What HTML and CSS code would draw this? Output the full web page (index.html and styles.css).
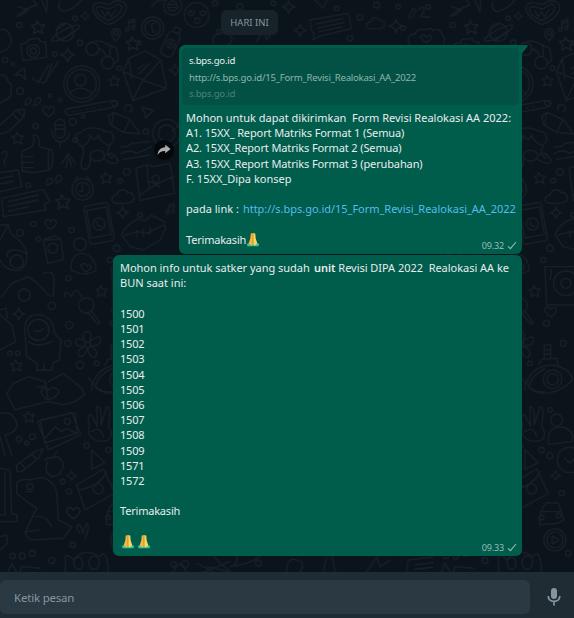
FILE: index.html
```html
<!DOCTYPE html>
<html lang="id">
<head>
<meta charset="utf-8">
<title>Chat</title>
<link rel="stylesheet" href="styles.css">
</head>
<body>
<svg class="defs" width="0" height="0" aria-hidden="true">
  <defs>
    <symbol id="pray" viewBox="0 0 14 15">
      <path d="M.7 12.200 3 10.700 7 12.500 11 10.700 13.300 12.200 12.300 14.300H1.700Z" fill="#35c3a0"/>
      <path d="M6.900 1.200H5.400Q4.800 1.200 4.700 2.200L4.300 6.500 2.700 11.200 4.800 13.600 6.900 12.600Z" fill="#f6b73c"/>
      <path d="M7.100 1.200H8.600Q9.200 1.200 9.300 2.200L9.700 6.500 11.300 11.200 9.200 13.600 7.100 12.600Z" fill="#ffd45c"/>
      <path d="M7 2V12" stroke="#d08a24" stroke-width=".6"/>
    </symbol>
    <symbol id="tick" viewBox="0 0 10 9"><path d="M1 5.300 3.400 7.700 9 1" fill="none" stroke="#8fbfb3" stroke-width="1.100"/></symbol>
    <symbol id="star" viewBox="-20 -20 40 40"><path d="M-3-18 4-7 18-7 9 4 13 17 0 10-12 17-9 3-18-6-6-7Z"/></symbol>
    <symbol id="spark" viewBox="-20 -20 40 40"><path d="M0-18Q2-3 18 0 3 3 0 18-3 3-18 0-2-3 0-18Z"/></symbol>
    <symbol id="heart" viewBox="-20 -20 40 40"><path d="M0 16Q-18 4-17-6C-15-16-3-15 0-6 4-16 17-14 17-4Q16 6 0 16Z"/></symbol>
    <symbol id="note" viewBox="-20 -20 40 40"><path d="M-5 11V-12L12-17V7M-5-5 12-10"/><circle cx="-9" cy="12" r="5"/><circle cx="8" cy="8" r="5"/></symbol>
    <symbol id="tri" viewBox="-20 -20 40 40"><path d="M-17-13 17-5-5 17-7 2Z"/></symbol>
    <symbol id="cloud" viewBox="-35 -25 70 50"><path d="M-25 18C-36 8-27-5-16-4-12-21 8-23 14-10 28-13 37 5 27 15Q10 24-25 18Z"/></symbol>
    <pattern id="doodles" width="433.300" height="572" patternUnits="userSpaceOnUse">
      <g transform="scale(.3333)" fill="none" stroke="#162026" stroke-width="4" stroke-linejoin="round" stroke-linecap="round">
        <!-- top row -->
        <path d="M325 74C265 45 270 5 300 8Q322 12 330 14C350-8 387 5 378 30Q367 60 325 74Z"/>
        <path d="M325 62C280 40 282 20 300 20L328 27 355 12C375 18 365 42 325 62ZM305 32 315 50 324 35 334 50 347 30"/>
        <path d="M50 50Q75 25 110 15L100 0M55 20 85 30 60 48M125 0 140 35 142 0M180 5Q170 25 190 35 220 30 245 0M455 20Q470-5 495 0"/>
        <circle cx="518" cy="18" r="27"/><circle cx="518" cy="18" r="15"/><path d="M508 13H528M508 22H528"/>
        <circle cx="590" cy="45" r="37"/><path d="M572 48Q560 38 567 33 572 31 573 36 579 30 583 37 582 44 572 48ZM607 48Q596 38 601 33 606 31 608 36 614 30 618 37 617 44 607 48Z"/><circle cx="592" cy="62" r="8"/>
        <circle cx="458" cy="84" r="33"/><circle cx="458" cy="84" r="23"/><path d="M465 68Q445 75 463 97"/>
        <g transform="rotate(-28 195 97)"><circle cx="195" cy="97" r="27"/><ellipse cx="195" cy="100" rx="47" ry="11"/><path d="M175 80 209 74M177 113 216 107"/></g>
        <path d="M347 123C325 100 337 86 349 87 365 88 367 102 347 123Z"/><circle cx="349" cy="100" r="6"/>
        <g transform="rotate(25 515 127)"><rect x="495" y="96" width="38" height="76" rx="13"/><path d="M505 96V80H524V96"/><circle cx="514" cy="132" r="13"/><path d="M514 124V140M506 132H522"/></g>
        <path d="M930 60 1045 40 1055 85 955 110 940 120 942 100 935 95ZM950 72 1030 55M955 84 1032 68M958 95 1025 81"/>
        <path d="M640 130Q635 100 660 103 675 85 693 110 705 130 670 140M740 70 790 58 800 120M770 125 790 90 800 120 830 80M945 0 970 25 982 0"/>
        <path d="M1225 55Q1240 10 1248 35L1233 55M1253 30Q1280 10 1270 38L1262 50 1290 52"/>
        <path d="M1230 135C1215 110 1235 100 1245 102 1250 80 1275 92 1282 88 1295 82 1298 88 1298 92"/>
        <path d="M1278 128Q1258 112 1264 107 1275 100 1280 112 1288 100 1295 110 1293 122 1278 128Z"/>
        <path d="M0 90C20 82 25 100 30 108 40 120 30 135 26 143 20 155 8 150 0 157"/>
        <!-- camera, glasses, envelope, avatar -->
        <path d="M62 132 82 128 87 118 115 115 122 124 136 126 140 172 69 182Z"/><circle cx="100" cy="153" r="19"/><circle cx="100" cy="153" r="9"/>
        <circle cx="277" cy="147" r="19"/><circle cx="323" cy="188" r="19"/><path d="M265 131Q280 120 305 125L350 145 355 180 340 193M297 147Q310 150 320 168M330 140V168"/>
        <path d="M370 215 387 175 435 153 482 180 500 265 398 302ZM370 215 430 240 482 180M398 302 428 241 500 265M395 235 387 180M412 207 432 195M416 222 450 190"/>
        <circle cx="245" cy="252" r="54"/><circle cx="245" cy="252" r="44"/><circle cx="241" cy="240" r="17"/><path d="M211 279Q240 250 274 279"/>
        <path d="M45 225 73 203 77 240 62 225ZM98 235 115 248 145 196M123 245 132 250 175 185M138 244 155 192"/>
        <path d="M0 225Q20 225 23 243 40 255 32 270 38 295 15 300L0 310"/>
        <path d="M75 315Q78 288 92 295 98 310 75 315ZM102 318Q105 286 121 295 126 310 102 318Z"/>
        <!-- pencils, thumb, puppy -->
        <path d="M199 327 335 302Q350 300 354 310 350 322 335 323L207 346Q190 340 199 327Z"/><path d="M220 335H222M240 331H242M260 328H262M280 324H282M300 320H302"/>
        <path d="M326 348 340 337 390 358 420 402 371 397 330 374ZM340 337 335 373M390 358 371 397"/>
        <path d="M0 375 50 330 73 328 72 350 25 395 0 402M50 330 72 350M37 341 60 364"/>
        <rect x="165" y="358" width="29" height="56" rx="14"/><path d="M153 390Q160 426 182 426 205 423 208 400M180 427V442M165 375H193M165 387H193"/>
        <path d="M65 455 95 440Q105 430 100 405 120 400 118 440L155 450Q165 480 150 510L100 518 67 513ZM67 470H98M65 487H98M67 503H100M145 450V510"/>
        <path d="M235 430Q220 420 230 400 245 400 250 390 285 375 320 395 340 392 341 420 335 430 330 435M235 430 250 445 250 468M330 435 322 460 335 475 340 470M245 440Q270 430 270 405 285 430 295 405 305 430 325 435"/>
        <path d="M248 465Q235 510 257 508 275 500 270 470M320 465Q340 450 355 485 340 500 310 475"/><ellipse cx="292" cy="467" rx="22" ry="16"/>
        <circle cx="500" cy="400" r="42"/><circle cx="500" cy="400" r="25"/><path d="M515 395 560 355"/>
        <path d="M362 440Q380 445 395 430L450 425M362 462Q385 445 410 460L455 440M370 478 450 465"/>
        <path d="M185 490 205 460 225 490M205 462 198 505M207 475 215 500M5 460Q25 445 20 470 15 482 10 480M12 482 15 498"/>
        <!-- chat cards, clock, map -->
        <path d="M0 518 55 510 65 560 0 575M0 535 38 528M0 552 40 543M5 595 130 568 150 605 133 612 138 630 10 650ZM25 605 115 585M22 620 115 600M25 634 85 620"/>
        <circle cx="248" cy="568" r="32"/><circle cx="248" cy="568" r="21"/><path d="M247 555V573L238 575M225 538 235 530M260 530 270 540"/>
        <path d="M408 505 440 495 460 500 510 490 524 580 470 590 420 602ZM440 495 447 560M418 590Q445 560 520 530M450 545Q470 550 480 562"/><circle cx="467" cy="537" r="11"/>
        <!-- phone, lips, person -->
        <rect x="260" y="612" width="74" height="116" rx="10" transform="rotate(-10 298 670)"/><rect x="267" y="625" width="60" height="84" transform="rotate(-10 298 670)"/><circle cx="297" cy="672" r="18"/><path d="M290 665Q290 678 303 680"/>
        <path d="M365 705Q375 675 415 657L435 662 455 646 493 665 497 685 480 720 430 750 390 740ZM375 705 415 695 440 700 490 675M410 690V710M430 687V708M450 682V703"/>
        <circle cx="240" cy="733" r="19"/><path d="M213 810Q210 765 245 760 285 765 288 810 270 825 240 820ZM248 808 242 795Q255 785 262 798 275 790 273 805L260 816Z"/>
        <path d="M130 720 165 708 183 718 190 778 143 790ZM130 720 183 718"/><circle cx="158" cy="745" r="15"/>
        <path d="M0 675 25 675 32 700Q65 720 80 755 85 800 55 812 10 810 0 780M25 675 0 720M20 770Q25 735 80 760"/><circle cx="50" cy="785" r="20"/>
        <path d="M5 890 35 850 85 830 110 848 150 890M130 820Q165 805 162 850L160 890M195 890Q190 870 205 880L215 890Q220 865 235 875L245 890"/><circle cx="73" cy="885" r="18"/>
        <path d="M335 800H430V915H340ZM355 810 350 840"/><circle cx="398" cy="850" r="37"/><circle cx="398" cy="850" r="15"/>
        <!-- bottle, astronaut, flower -->
        <path d="M0 945 35 975 47 1025 0 1050M0 930 18 925 22 955"/>
        <circle cx="115" cy="990" r="32"/><path d="M75 1000Q70 940 120 944 165 955 162 1000L183 1020 178 1080 160 1088 155 1110 110 1110 112 1090 80 1070ZM103 990Q115 1000 128 987M85 1025Q110 1045 155 1025M132 1090V1110"/>
        <circle cx="263" cy="1035" r="9"/><path d="M255 1025Q240 995 265 995 280 1000 268 1025 300 1000 302 1020 300 1038 273 1038 300 1055 285 1072 270 1075 262 1046 250 1080 235 1065 230 1050 252 1040 220 1040 228 1020 240 1010 255 1025Z"/>
        <circle cx="259" cy="916" r="23"/><path d="M275 934 300 968 292 972 265 940"/>
        <path d="M20 1180 40 1150 85 1130 135 1145Q145 1165 110 1160M135 1145 145 1205 120 1210M20 1180 45 1230 120 1210M145 1145 190 1120 245 1165 253 1185 225 1205 190 1215 145 1205"/>
        <path d="M142 1200Q115 1180 128 1165 140 1160 145 1170 160 1155 175 1170 180 1190 142 1200Z"/>
        <path d="M335 1105Q290 1130 287 1160 305 1180 335 1175M265 1135Q280 1140 275 1170"/>
        <!-- pictures, hand, pencil -->
        <path d="M112 1265 215 1238 242 1305 145 1350ZM120 1260 225 1238 232 1300 135 1328ZM135 1315 165 1280 185 1295 200 1285 230 1300"/><circle cx="202" cy="1265" r="9"/>
        <path d="M268 1275Q260 1240 275 1245L292 1280 290 1220Q305 1215 303 1275L320 1220Q335 1220 325 1280 345 1305 320 1323 280 1330 265 1300ZM275 1295Q300 1275 310 1310"/>
        <path d="M0 1240Q40 1230 52 1275 45 1300 15 1305L35 1365M0 1310 15 1365"/>
        <path d="M50 1395 105 1355 130 1346 115 1375 65 1415 50 1415ZM95 1362 110 1378M60 1387 75 1405"/>
        <path d="M142 1390Q130 1370 150 1375 180 1360 190 1395 185 1430 155 1430 130 1415 142 1390ZM158 1375 170 1355M275 1350 315 1388 275 1408Z"/>
        <path d="M230 1455 310 1407 345 1480 255 1530ZM235 1470Q300 1460 320 1415"/><circle cx="295" cy="1467" r="15"/>
        <!-- dinosaur -->
        <path d="M50 1480 50 1450Q60 1435 90 1440L125 1433Q160 1440 170 1475L175 1560 215 1580 190 1615 90 1620 75 1600 90 1565 110 1525 75 1500ZM75 1475H95M105 1550Q140 1545 155 1580M80 1595 120 1590"/><circle cx="90" cy="1460" r="9"/>
        <path d="M0 1405 30 1410 35 1540 50 1545V1565H0M15 1415V1545H0M0 1610 20 1605 22 1630 0 1650"/>
        <path d="M240 1600Q220 1575 240 1575L250 1600Q260 1550 265 1585L255 1620M196 1716V1670Q205 1660 220 1680 250 1640 300 1670 320 1640 325 1716"/>
        <ellipse cx="235" cy="1690" rx="13" ry="18"/><ellipse cx="282" cy="1688" rx="16" ry="20"/><path d="M60 1716 65 1700 120 1705M25 1716 35 1690 50 1716"/>
        <!-- ornament, car, play -->
        <path d="M280 1145Q300 1100 350 1095 410 1100 418 1140 380 1180 330 1180 285 1175 280 1145ZM315 1095 325 1078 370 1075 375 1095M333 1075V1035H352V1075M333 1050H352M333 1062H352"/><circle cx="358" cy="1138" r="28"/><circle cx="358" cy="1138" r="17"/>
        <circle cx="370" cy="1260" r="18"/><path d="M345 1320Q345 1280 380 1282 410 1280 420 1310L415 1325 347 1333Z"/>
        <path d="M318 1560 325 1530 340 1508 375 1510 385 1535 392 1560 375 1570 320 1575ZM325 1535H380"/><circle cx="325" cy="1553" r="7"/><circle cx="376" cy="1547" r="7"/>
        <circle cx="365" cy="1620" r="33"/><circle cx="365" cy="1620" r="24"/><path d="M357 1608V1633L377 1620Z"/>
        <circle cx="410" cy="1380" r="38"/><path d="M395 1375 410 1390 425 1375"/>
        <!-- bottom strip -->
        <path d="M520 1716Q540 1670 560 1716M590 1690 640 1716M620 1700 690 1716M640 1670 690 1716M590 1725 690 1685M710 1665Q715 1700 690 1700 770 1690 790 1655M860 1716Q860 1670 890 1680 920 1690 900 1716M980 1670 970 1716M995 1660 1005 1716M1100 1716 1130 1670 1140 1700 1170 1680M1220 1716 1225 1680 1298 1672M1245 1695 1298 1688M1245 1708 1298 1702"/>
        <use href="#star" x="92" y="60" width="44" height="44"/><use href="#star" x="376" y="108" width="46" height="46"/><use href="#star" x="325" y="225" width="36" height="36"/><use href="#star" x="33" y="395" width="40" height="40"/><use href="#star" x="300" y="515" width="38" height="38"/><use href="#star" x="165" y="582" width="48" height="48"/><use href="#star" x="285" y="855" width="38" height="38"/><use href="#star" x="30" y="1078" width="38" height="38"/><use href="#star" x="68" y="1232" width="38" height="38"/>
        <use href="#spark" x="240" y="33" width="30" height="30"/><use href="#spark" x="180" y="142" width="46" height="46"/><use href="#spark" x="505" y="190" width="40" height="40"/><use href="#spark" x="348" y="618" width="40" height="40"/><use href="#spark" x="36" y="922" width="40" height="40"/><use href="#spark" x="198" y="1410" width="34" height="34"/><use href="#spark" x="845" y="0" width="42" height="42"/><use href="#spark" x="880" y="70" width="42" height="42"/><use href="#spark" x="1165" y="55" width="46" height="46"/><use href="#spark" x="350" y="1410" width="34" height="34"/>
        <use href="#heart" x="125" y="312" width="42" height="42"/><use href="#heart" x="132" y="652" width="40" height="40"/><use href="#heart" x="197" y="1515" width="46" height="46"/><use href="#heart" x="332" y="915" width="40" height="40"/>
        <use href="#note" x="370" y="52" width="42" height="46"/><use href="#note" x="492" y="605" width="38" height="42"/><use href="#tri" x="418" y="315" width="48" height="42"/><use href="#cloud" x="330" y="562" width="76" height="54"/><use href="#cloud" x="1095" y="45" width="62" height="48"/>
        <path d="M375 330Q370 310 390 315 405 325 390 335M140 555Q135 535 155 535 165 550 140 555ZM168 550Q163 528 180 525 195 540 168 550Z"/>
        <g><circle cx="58" cy="75" r="8"/><circle cx="225" cy="55" r="7"/><circle cx="240" cy="128" r="8"/><circle cx="418" cy="130" r="5"/><circle cx="15" cy="180" r="8"/><circle cx="38" cy="192" r="5"/><circle cx="165" cy="162" r="7"/><circle cx="358" cy="205" r="7"/><circle cx="60" cy="273" r="10"/><circle cx="180" cy="300" r="5"/><circle cx="150" cy="287" r="5"/><circle cx="343" cy="310" r="8"/><circle cx="218" cy="365" r="10"/><circle cx="250" cy="350" r="5"/><circle cx="107" cy="378" r="8"/><circle cx="437" cy="395" r="8"/><circle cx="226" cy="420" r="7"/><circle cx="380" cy="515" r="10"/><circle cx="360" cy="542" r="7"/><circle cx="85" cy="555" r="7"/><circle cx="420" cy="645" r="7"/><circle cx="100" cy="672" r="7"/><circle cx="60" cy="698" r="10"/><circle cx="215" cy="690" r="8"/><circle cx="115" cy="718" r="7"/><circle cx="350" cy="745" r="10"/><circle cx="205" cy="835" r="8"/><circle cx="330" cy="780" r="8"/><circle cx="155" cy="918" r="11"/><circle cx="208" cy="975" r="11"/><circle cx="203" cy="1030" r="9"/><circle cx="240" cy="1095" r="11"/><circle cx="30" cy="1060" r="7"/><circle cx="53" cy="1060" r="7"/><circle cx="290" cy="1090" r="7"/><circle cx="97" cy="1310" r="9"/><circle cx="80" cy="1330" r="6"/><circle cx="57" cy="1318" r="8"/><circle cx="260" cy="1337" r="8"/><circle cx="325" cy="1350" r="8"/><circle cx="188" cy="1445" r="7"/><circle cx="207" cy="1475" r="8"/><circle cx="218" cy="1635" r="8"/><circle cx="38" cy="1668" r="8"/><circle cx="67" cy="1668" r="9"/><circle cx="97" cy="1660" r="9"/><circle cx="155" cy="1682" r="9"/><circle cx="645" cy="10" r="8"/><circle cx="655" cy="95" r="6"/><circle cx="720" cy="20" r="9"/><circle cx="820" cy="10" r="7"/><circle cx="1080" cy="52" r="9"/><circle cx="1010" cy="25" r="7"/><circle cx="1050" cy="115" r="8"/><circle cx="1130" cy="15" r="9"/><circle cx="1195" cy="20" r="7"/><circle cx="1210" cy="85" r="7"/><circle cx="1285" cy="20" r="7"/><circle cx="340" cy="970" r="9"/><circle cx="390" cy="1030" r="9"/><circle cx="350" cy="1230" r="7"/><circle cx="350" cy="1368" r="9"/><circle cx="405" cy="1660" r="8"/><circle cx="385" cy="1480" r="8"/><circle cx="520" cy="1693" r="8"/><circle cx="555" cy="1693" r="11"/><circle cx="775" cy="1690" r="9"/></g>
      </g>
    </pattern>
  </defs>
</svg>
<div class="app">
  <main class="chat">
    <svg class="wallpaper" width="574" height="572" aria-hidden="true"><rect width="574" height="572" fill="url(#doodles)"/></svg>
    <div class="date">HARI INI</div>
    <div class="row">
      <span class="forward">
        <svg width="14" height="12" viewBox="0 0 14 12"><path d="M8.200.8 13.600 5 8.200 9.300V6.900C4.500 6.800 2.200 8 .6 11 .9 6.200 3.700 3.400 8.200 3.200Z" fill="#a9adaf"/></svg>
      </span>
      <article class="bubble first">
        <svg class="tail" width="6" height="9" viewBox="0 0 6 9"><path d="M0 0H4.500Q6.500.3 5.200 2L0 8.500Z" fill="#025e4b"/></svg>
        <div class="preview">
          <div class="site">s.bps.go.id</div>
          <div class="url">http://s.bps.go.id/15_Form_Revisi_Realokasi_AA_2022</div>
          <div class="host">s.bps.go.id</div>
        </div>
        <div class="text">
          <p>Mohon untuk dapat dikirimkan&nbsp; Form Revisi Realokasi AA 2022:</p>
          <p class="tight">A1. 15XX_ Report Matriks Format 1 (Semua)</p>
          <p class="tight">A2. 15XX_Report Matriks Format 2 (Semua)</p>
          <p class="tight">A3. 15XX_Report Matriks Format 3 (perubahan)</p>
          <p>F. 15XX_Dipa konsep</p>
          <p></p>
          <p>pada link&nbsp;: <a class="link">http://s.bps.go.id/15_Form_Revisi_Realokasi_AA_2022</a></p>
          <p></p>
          <p><span class="snug">Terimakasih</span><svg class="emoji"><use href="#pray"/></svg></p>
        </div>
        <div class="meta">09.32<svg class="tick"><use href="#tick"/></svg></div>
      </article>
    </div>
    <div class="row">
      <article class="bubble second">
        <div class="text">
          <p class="intro">Mohon info untuk satker yang sudah <b>unit</b> Revisi DIPA 2022&nbsp; Realokasi AA ke</p>
          <p>BUN saat ini:</p>
          <p></p>
          <p class="snug">1500</p><p class="snug">1501</p><p class="snug">1502</p><p class="snug">1503</p><p class="snug">1504</p><p class="snug">1505</p><p class="snug">1506</p><p class="snug">1507</p><p class="snug">1508</p><p class="snug">1509</p><p class="snug">1571</p><p class="snug">1572</p>
          <p></p>
          <p class="snug">Terimakasih</p>
          <p></p>
          <p><svg class="emoji lead"><use href="#pray"/></svg><svg class="emoji"><use href="#pray"/></svg></p>
        </div>
        <div class="meta">09.33<svg class="tick"><use href="#tick"/></svg></div>
      </article>
    </div>
  </main>
  <footer class="composer">
    <div class="input">Ketik pesan</div>
    <svg class="mic" width="14" height="20" viewBox="0 0 14 20"><rect x="4" y="1" width="6" height="11" rx="3" fill="#8696a0"/><path d="M1.200 9C1.400 12.500 4 14.300 7 14.300S12.600 12.500 12.800 9M7 14.300V18.500" fill="none" stroke="#8696a0" stroke-width="1.700"/></svg>
  </footer>
</div>
</body>
</html>
```
FILE: styles.css
```css
* { box-sizing: border-box; }
body {
  margin: 0;
  background: #0b141a;
  font-family: "Noto Sans", "Open Sans", sans-serif;
  color: #e9edef;
}
.defs { position: absolute; }
.app {
  display: flex;
  flex-direction: column;
  width: 574px;
  height: 618px;
  overflow: hidden;
}
.chat {
  position: relative;
  height: 572px;
  padding-top: 10px;
  display: flex;
  flex-direction: column;
}
.wallpaper { position: absolute; inset: 0; }
.date {
  position: relative;
  width: 57px;
  height: 25px;
  margin-left: 221px;
  border-radius: 6px;
  background: #182229;
  color: #8696a0;
  font-size: 9.500px;
  line-height: 25px;
  text-align: center;
  white-space: nowrap;
}
.row {
  position: relative;
  display: flex;
  justify-content: flex-end;
  align-items: center;
  padding-right: 52px;
}
.date + .row { margin-top: 10px; }
.forward {
  display: grid;
  place-items: center;
  width: 20px;
  height: 20px;
  margin-right: 5px;
  border-radius: 50%;
  background: #05080a;
}
.bubble {
  position: relative;
  background: #005c4b;
  border-radius: 6px;
}
.first {
  width: 343px;
  height: 209px;
  padding: 3px 3px 0;
  border-top-right-radius: 0;
}
.second {
  width: 409px;
  height: 301px;
  margin-top: 1px;
  padding: 5.300px 3px 0;
}
.tail { position: absolute; left: 343px; top: 0; }
.preview {
  height: 57px;
  padding: 5px 7px 0;
  border-radius: 5px;
  background: #025144;
  font-size: 9.600px;
  line-height: 16.500px;
  letter-spacing: -.24px;
  white-space: nowrap;
}
.url { color: #8db5ad; }
.host { color: #4d8074; }
.text {
  padding: 0 4px;
  font-size: 11px;
  line-height: 15.200px;
  white-space: nowrap;
}
.first .text { padding-top: 5px; }
.text p { margin: 0; height: 15.200px; }
.tight { letter-spacing: -.120px; }
.snug { letter-spacing: -.200px; }
.intro { letter-spacing: -.030px; }
.intro b { font-weight: 600; margin-left: 1.500px; }
.link { color: #53bdeb; letter-spacing: -.030px; margin-left: 1.200px; }
.emoji { width: 14px; height: 15px; margin: -4px 0 0; vertical-align: -3px; }
.emoji.lead { margin: -4px 2px 0 1px; }
.meta {
  position: absolute;
  right: 5px;
  bottom: 2px;
  display: flex;
  align-items: center;
  gap: 3px;
  color: #99beb7;
  font-size: 9px;
  line-height: 13px;
  letter-spacing: -.150px;
}
.tick { width: 10px; height: 9px; }
.composer {
  display: flex;
  align-items: center;
  height: 46px;
  padding-top: 4px;
  background: #202c33;
}
.input {
  width: 530px;
  height: 34px;
  padding-left: 14px;
  border-radius: 6px;
  background: #2a3942;
  color: #8696a0;
  font-size: 11.500px;
  line-height: 35px;
  letter-spacing: -.200px;
}
.mic { margin-left: 17px; }
```
